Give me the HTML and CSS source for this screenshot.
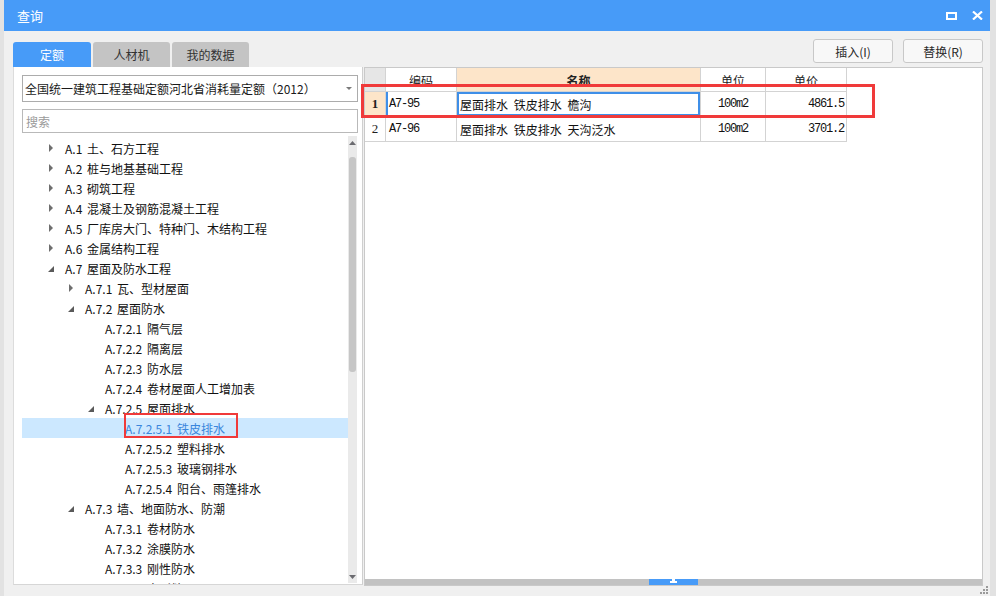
FILE: index.html
```html
<!DOCTYPE html>
<html lang="zh-CN">
<head>
<meta charset="utf-8">
<title>查询</title>
<link rel="stylesheet" href="styles.css">
</head>
<body>
<div class="window">
  <div class="titlebar">
    <span class="title">查询</span>
    <div class="ctrls">
      <svg class="ic-max" width="11" height="8" viewBox="0 0 11 8"><rect x="1" y="1" width="9" height="6" fill="none" stroke="#fff" stroke-width="2"/></svg>
      <svg class="ic-close" width="11" height="9" viewBox="0 0 11 9"><path d="M1 0.5 L10 8.5 M10 0.5 L1 8.5" stroke="#fff" stroke-width="2.2" fill="none"/></svg>
    </div>
  </div>
  <div class="body">
    <div class="toolbar">
      <div class="tabs">
        <div class="tab active">定额</div>
        <div class="tab">人材机</div>
        <div class="tab">我的数据</div>
      </div>
      <div class="btns">
        <div class="btn">插入(I)</div>
        <div class="btn">替换(R)</div>
      </div>
    </div>
    <div class="main">
      <div class="left">
        <div class="select">
          <span>全国统一建筑工程基础定额河北省消耗量定额（2012）</span>
          <svg class="caret" width="6" height="3" viewBox="0 0 6 3"><path d="M0 0 H6 L3 3Z" fill="#7a7a7a"/></svg>
        </div>
        <div class="search">搜索</div>
        <div class="treewrap">
          <div class="tree">
            <div class="row l0"><span class="tw"><svg width="5" height="8" viewBox="0 0 5 8"><path d="M0 0 L4 4 L0 8Z" fill="#6e6e6e"/></svg></span>A.1 土、石方工程</div>
            <div class="row l0"><span class="tw"><svg width="5" height="8" viewBox="0 0 5 8"><path d="M0 0 L4 4 L0 8Z" fill="#6e6e6e"/></svg></span>A.2 桩与地基基础工程</div>
            <div class="row l0"><span class="tw"><svg width="5" height="8" viewBox="0 0 5 8"><path d="M0 0 L4 4 L0 8Z" fill="#6e6e6e"/></svg></span>A.3 砌筑工程</div>
            <div class="row l0"><span class="tw"><svg width="5" height="8" viewBox="0 0 5 8"><path d="M0 0 L4 4 L0 8Z" fill="#6e6e6e"/></svg></span>A.4 混凝土及钢筋混凝土工程</div>
            <div class="row l0"><span class="tw"><svg width="5" height="8" viewBox="0 0 5 8"><path d="M0 0 L4 4 L0 8Z" fill="#6e6e6e"/></svg></span>A.5 厂库房大门、特种门、木结构工程</div>
            <div class="row l0"><span class="tw"><svg width="5" height="8" viewBox="0 0 5 8"><path d="M0 0 L4 4 L0 8Z" fill="#6e6e6e"/></svg></span>A.6 金属结构工程</div>
            <div class="row l0"><span class="tw"><svg class="exp" width="7" height="7" viewBox="0 0 7 7"><path d="M6 0 L6 6 L0 6Z" fill="#5a5a5a"/></svg></span>A.7 屋面及防水工程</div>
            <div class="row l1"><span class="tw"><svg width="5" height="8" viewBox="0 0 5 8"><path d="M0 0 L4 4 L0 8Z" fill="#6e6e6e"/></svg></span>A.7.1 瓦、型材屋面</div>
            <div class="row l1"><span class="tw"><svg class="exp" width="7" height="7" viewBox="0 0 7 7"><path d="M6 0 L6 6 L0 6Z" fill="#5a5a5a"/></svg></span>A.7.2 屋面防水</div>
            <div class="row l2"><span class="tw"></span>A.7.2.1 隔气层</div>
            <div class="row l2"><span class="tw"></span>A.7.2.2 隔离层</div>
            <div class="row l2"><span class="tw"></span>A.7.2.3 防水层</div>
            <div class="row l2"><span class="tw"></span>A.7.2.4 卷材屋面人工增加表</div>
            <div class="row l2"><span class="tw"><svg class="exp" width="7" height="7" viewBox="0 0 7 7"><path d="M6 0 L6 6 L0 6Z" fill="#5a5a5a"/></svg></span>A.7.2.5 屋面排水</div>
            <div class="row l3 sel"><span class="tw"></span>A.7.2.5.1 铁皮排水</div>
            <div class="row l3"><span class="tw"></span>A.7.2.5.2 塑料排水</div>
            <div class="row l3"><span class="tw"></span>A.7.2.5.3 玻璃钢排水</div>
            <div class="row l3"><span class="tw"></span>A.7.2.5.4 阳台、雨篷排水</div>
            <div class="row l1"><span class="tw"><svg class="exp" width="7" height="7" viewBox="0 0 7 7"><path d="M6 0 L6 6 L0 6Z" fill="#5a5a5a"/></svg></span>A.7.3 墙、地面防水、防潮</div>
            <div class="row l2"><span class="tw"></span>A.7.3.1 卷材防水</div>
            <div class="row l2"><span class="tw"></span>A.7.3.2 涂膜防水</div>
            <div class="row l2"><span class="tw"></span>A.7.3.3 刚性防水</div>
            <div class="row l2"><span class="tw"></span>A.7.3.4 变形缝</div>
          </div>
          <div class="vscroll">
            <svg class="arr" width="9" height="6" viewBox="0 0 9 6"><path d="M1 5 L4.5 1 L8 5Z" fill="#6b6b70"/></svg>
            <div class="vtrack"><div class="vthumb"></div></div>
            <svg class="arr" width="9" height="6" viewBox="0 0 9 6"><path d="M1 1 L4.5 5 L8 1Z" fill="#6b6b70"/></svg>
          </div>
        </div>
      </div>
      <div class="right">
        <div class="grid">
          <div class="c hd rn"></div>
          <div class="c hd ctr">编码</div>
          <div class="c hd ctr cur">名称</div>
          <div class="c hd ctr">单位</div>
          <div class="c hd ctr">单价</div>

          <div class="c rn rn-sel">1</div>
          <div class="c code mark">A7-95</div>
          <div class="c name focus">屋面排水 铁皮排水 檐沟</div>
          <div class="c num ctr">100m2</div>
          <div class="c num rt">4861.5</div>

          <div class="c rn">2</div>
          <div class="c code">A7-96</div>
          <div class="c name">屋面排水 铁皮排水 天沟泛水</div>
          <div class="c num ctr">100m2</div>
          <div class="c num rt">3701.2</div>
        </div>
        <div class="hscroll">
          <div class="hthumb"><svg width="7" height="4" viewBox="0 0 7 4"><path d="M2 0 H5 V2 H7 V4 H0 V2 H2Z" fill="#fff"/></svg></div>
        </div>
      </div>
    </div>
  </div>
  <div class="redbox rb-table"></div>
  <div class="redbox rb-tree"></div>
  <svg class="grip" width="8" height="8" viewBox="0 0 8 8">
    <rect x="6" y="0" width="2" height="2" fill="#9a9a9a"/>
    <rect x="3" y="3" width="2" height="2" fill="#9a9a9a"/>
    <rect x="6" y="3" width="2" height="2" fill="#9a9a9a"/>
    <rect x="0" y="6" width="2" height="2" fill="#9a9a9a"/>
    <rect x="3" y="6" width="2" height="2" fill="#9a9a9a"/>
    <rect x="6" y="6" width="2" height="2" fill="#9a9a9a"/>
  </svg>
</div>
</body>
</html>
```

FILE: styles.css
```css
* { box-sizing: border-box; }
html, body { margin: 0; padding: 0; }
body {
  background: #e2e2e2;
  font-family: "Noto Sans CJK SC", "Noto Sans", sans-serif;
  font-size: 12px;
  color: #1e1e1e;
  width: 996px;
  height: 596px;
  overflow: hidden;
}
.window {
  position: relative;
  margin-left: 4px;
  width: 986px;
  height: 596px;
  background: #f0f0f0;
  display: flex;
  flex-direction: column;
  overflow: hidden;
}
.titlebar {
  height: 31px;
  flex: none;
  background: #479bf8;
  color: #fff;
  display: flex;
  align-items: center;
  justify-content: space-between;
  padding: 0 7px 0 13px;
}
.title { font-size: 13px; line-height: 1; }
.ctrls { display: flex; align-items: center; gap: 15px; }
.ctrls svg { display: block; }
.body {
  flex: 1;
  display: flex;
  flex-direction: column;
  padding: 8px 7px 0 9px;
}
.toolbar {
  height: 28px;
  display: flex;
  justify-content: space-between;
  flex: none;
}
.tabs { display: flex; gap: 2px; align-self: flex-end; }
.tab {
  width: 77px;
  height: 25px;
  border-radius: 3px 3px 0 0;
  background: #c4c4c4;
  color: #333;
  display: flex;
  align-items: center;
  justify-content: center;
}
.tab.active { width: 78px; background: #479bf8; color: #fff; }
.btns { display: flex; gap: 10px; align-self: flex-start; }
.btn {
  width: 80px;
  height: 24px;
  border: 1px solid #c8c8c8;
  border-radius: 3px;
  background: #f8f8f8;
  color: #2a2a2a;
  display: flex;
  align-items: center;
  justify-content: center;
}
.main {
  height: 519px;
  display: flex;
  gap: 1px;
}
.left {
  width: 350px;
  height: 518px;
  background: #fff;
  border-left: 1px solid #dcdcdc;
  border-right: 1px solid #cfcfcf;
  border-bottom: 1px solid #d6d6d6;
  padding: 8px 4px 0 8px;
  display: flex;
  flex-direction: column;
}
.select {
  height: 27px;
  flex: none;
  border: 1px solid #acacac;
  display: flex;
  align-items: center;
  justify-content: space-between;
  padding: 0 5px 0 2px;
  color: #1a1a1a;
}
.search {
  margin-top: 7px;
  height: 24px;
  flex: none;
  border: 1px solid #b9b9b9;
  color: #9a9a9a;
  display: flex;
  align-items: center;
  padding-left: 3px;
}
.treewrap {
  margin-top: 3px;
  flex: 1;
  display: flex;
  min-height: 0;
}
.tree {
  width: 326px;
  flex: none;
  padding-top: 2px;
  overflow: hidden;
}
.row {
  height: 20px;
  display: flex;
  align-items: center;
  white-space: pre;
  word-spacing: 2px;
  color: #111;
}
.row.l0 { padding-left: 27px; }
.row.l1 { padding-left: 47px; }
.row.l2 { padding-left: 67px; }
.row.l3 { padding-left: 87px; }
.row.sel { background: #cce8ff; color: #3a86dc; }
.tw { width: 16px; flex: none; display: flex; align-items: center; }
.tw svg { display: block; }
.tw svg.exp { margin-left: -1px; margin-top: 2px; }
.vscroll {
  width: 9px;
  flex: none;
  margin-bottom: 1px;
  background: #eaeaea;
  display: flex;
  flex-direction: column;
  align-items: center;
  padding: 4px 0 3px;
}
.vscroll .arr { display: block; flex: none; }
.vtrack { flex: 1; width: 100%; padding-top: 11px; }
.vthumb {
  width: 7px;
  height: 215px;
  margin: 0 auto;
  background: #c6c6c6;
  border-radius: 3px;
}
.right {
  width: 619px;
  background: #fff;
  border: 1px solid #c9c9c9;
  display: flex;
  flex-direction: column;
}
.grid {
  display: grid;
  grid-template-columns: 21px 71px 244px 65px 81px;
  grid-template-rows: 24px 25px 25px;
  width: 482px;
}
.c {
  border-right: 1px solid #d3d3d3;
  border-bottom: 1px solid #d3d3d3;
  display: flex;
  align-items: center;
  white-space: pre;
  overflow: hidden;
  padding: 0 3px;
}
.hd { background: #fff; color: #222; font-size: 12px; padding-top: 2px; }
.hd.rn { background: #e6e6e6; }
.hd.cur { background: #fde5c9; font-weight: bold; }
.ctr { justify-content: center; }
.rt { justify-content: flex-end; padding-right: 2px; }
.rn {
  justify-content: center;
  font-family: "Liberation Serif", serif;
  font-size: 13px;
  padding: 0;
}
.rn-sel { background: #fde5c9; font-weight: bold; }
.code, .num {
  font-family: "Liberation Mono", monospace;
  font-size: 12px;
  letter-spacing: -1.2px;
  color: #111;
}
.code.mark { border-left: 2px solid #3f8fe8; padding-left: 1px; }
.name { padding-left: 3px; color: #111; word-spacing: 3px; }
.name.focus { box-shadow: inset 0 0 0 2px #3f8fe8; }
.hscroll {
  margin-top: auto;
  margin-bottom: 0;
  height: 6px;
  background: #c2c2c2;
  padding-left: 284px;
}
.hthumb {
  width: 49px;
  height: 6px;
  background: #479bf8;
  display: flex;
  align-items: flex-start;
  justify-content: center;
}
.hthumb svg { display: block; margin-top: 0; }
.redbox {
  position: absolute;
  border: 3px solid #f03a3a;
  pointer-events: none;
}
.rb-table { left: 357px; top: 84px; width: 514px; height: 34px; }
.rb-tree { left: 120px; top: 413px; width: 114px; height: 25px; border-width: 2px; }
.grip { position: absolute; right: 2px; bottom: 2px; }
```
